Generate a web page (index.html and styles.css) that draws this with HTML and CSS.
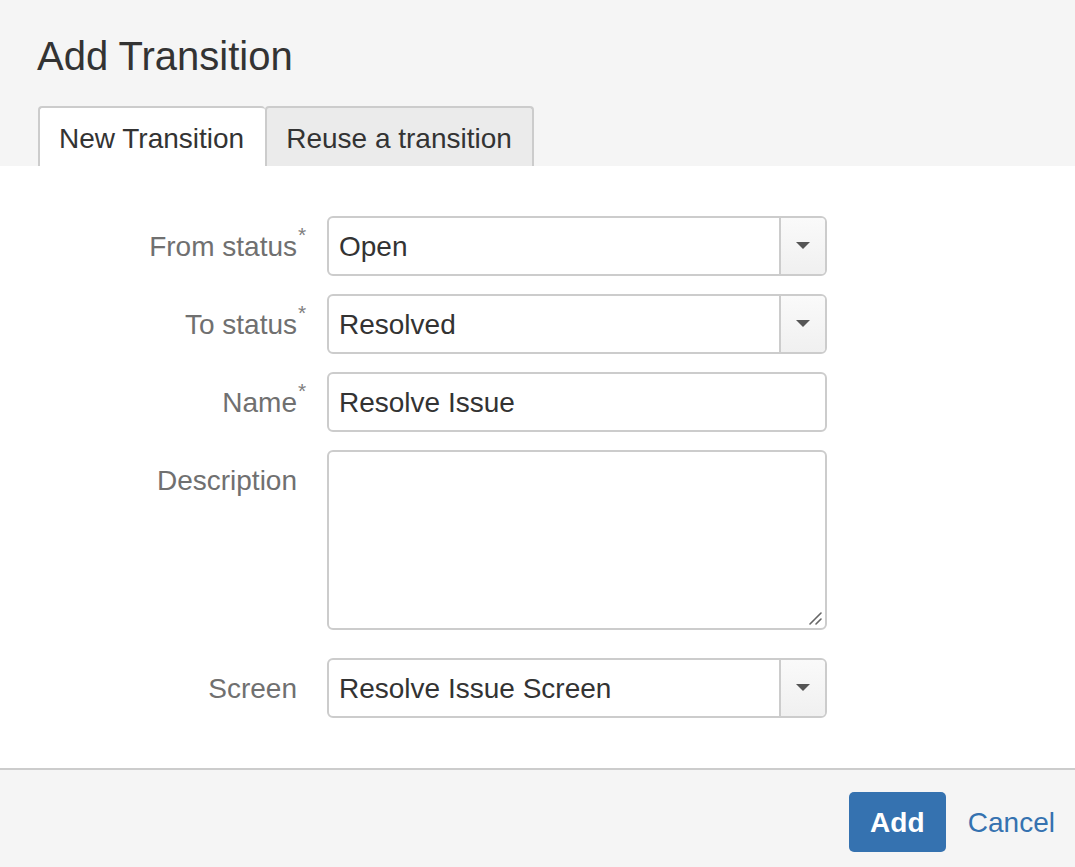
FILE: index.html
```html
<!DOCTYPE html>
<html lang="en">
<head>
<meta charset="utf-8">
<title>Add Transition</title>
<link rel="stylesheet" href="styles.css">
</head>
<body>
<div class="dialog">
  <header class="dialog-header">
    <h1 class="dialog-title">Add Transition</h1>
    <nav class="tabs">
      <span class="tab tab-active">New Transition</span>
      <span class="tab">Reuse a transition</span>
    </nav>
  </header>
  <main class="dialog-body">
    <form class="form">
      <label class="label"><span class="label-text">From status<span class="req">*</span></span></label>
      <div class="select">
        <span class="select-value">Open</span>
        <span class="select-btn"><svg width="14" height="7" viewBox="0 0 14 7"><path d="M0 0H14L7 7Z" fill="#555"/></svg></span>
      </div>

      <label class="label"><span class="label-text">To status<span class="req">*</span></span></label>
      <div class="select">
        <span class="select-value">Resolved</span>
        <span class="select-btn"><svg width="14" height="7" viewBox="0 0 14 7"><path d="M0 0H14L7 7Z" fill="#555"/></svg></span>
      </div>

      <label class="label"><span class="label-text">Name<span class="req">*</span></span></label>
      <div class="input"><span class="select-value">Resolve Issue</span></div>

      <label class="label"><span class="label-text">Description</span></label>
      <div class="textarea">
        <svg class="grip" width="14" height="14" viewBox="0 0 14 14"><path d="M13 2L2 13M13 8L8 13" stroke="#666" stroke-width="1.6" stroke-linecap="round"/></svg>
      </div>

      <label class="label label-screen"><span class="label-text">Screen</span></label>
      <div class="select select-screen">
        <span class="select-value">Resolve Issue Screen</span>
        <span class="select-btn"><svg width="14" height="7" viewBox="0 0 14 7"><path d="M0 0H14L7 7Z" fill="#555"/></svg></span>
      </div>
    </form>
  </main>
  <footer class="dialog-footer">
    <button class="btn-primary" type="button">Add</button>
    <a class="link-cancel" href="#">Cancel</a>
  </footer>
</div>
</body>
</html>
```
FILE: styles.css
```css
* { box-sizing: border-box; }
html, body { margin: 0; padding: 0; }
body {
  font-family: "Liberation Sans", Arial, Helvetica, sans-serif;
  color: #333;
  background: #fff;
}
.dialog {
  width: 1075px;
  height: 867px;
  display: flex;
  flex-direction: column;
}
.dialog-header {
  background: #f5f5f5;
  padding: 32px 0 0 38px;
  height: 166px;
}
.dialog-title {
  margin: 0 0 26px -1px;
  font-size: 40px;
  line-height: 48px;
  font-weight: normal;
  color: #333;
}
.tabs {
  display: flex;
}
.tab {
  display: block;
  font-size: 28px;
  line-height: 32px;
  height: 60px;
  padding: 15px 20px 11px 19px;
  border: 2px solid #ccc;
  border-bottom: 0;
  border-radius: 4px 4px 0 0;
  background: #ebebeb;
  color: #333;
}
.tab-active {
  background: #fff;
  border-right: 0;
  padding-right: 21px;
}
.dialog-body {
  height: 602px;
  padding: 50px 0;
  background: #fff;
}
.form {
  display: grid;
  grid-template-columns: 297px 500px;
  column-gap: 30px;
  row-gap: 18px;
}
.label {
  text-align: right;
  font-size: 28px;
  line-height: 56px;
  padding-top: 3px;
  color: #707070;
}
.label-text {
  position: relative;
}
.req {
  position: absolute;
  left: 100%;
  top: -7px;
  margin-left: 1px;
  font-size: 21px;
  line-height: 21px;
  color: #808080;
}
.select, .input, .textarea {
  border: 2px solid #ccc;
  border-radius: 6px;
  background: #fff;
  height: 60px;
  display: flex;
}
.select-value {
  flex: 1;
  font-size: 28px;
  line-height: 56px;
  padding: 1px 0 0 10px;
  color: #333;
}
.select-btn {
  width: 46px;
  border-left: 2px solid #ccc;
  background: linear-gradient(#fafafa, #f0f0f0);
  border-radius: 0 4px 4px 0;
  display: flex;
  align-items: center;
  justify-content: center;
  padding-bottom: 2px;
}
.textarea {
  height: 180px;
  position: relative;
}
.grip {
  position: absolute;
  right: 3px;
  bottom: 3px;
}
.label-screen, .select-screen {
  margin-top: 10px;
}
.dialog-footer {
  border-top: 2px solid #ccc;
  background: #f5f5f5;
  height: 99px;
  display: flex;
  justify-content: flex-end;
  align-items: flex-start;
  padding: 22px 20px 0 0;
}
.btn-primary {
  font-family: inherit;
  font-size: 28px;
  font-weight: bold;
  color: #fff;
  background: #3572b0;
  border: 0;
  border-radius: 5px;
  height: 60px;
  width: 97px;
  padding: 1px 0 0;
  line-height: 59px;
}
.link-cancel {
  font-size: 28px;
  line-height: 60px;
  padding-top: 1px;
  color: #3572b0;
  text-decoration: none;
  margin-left: 22px;
}
```
